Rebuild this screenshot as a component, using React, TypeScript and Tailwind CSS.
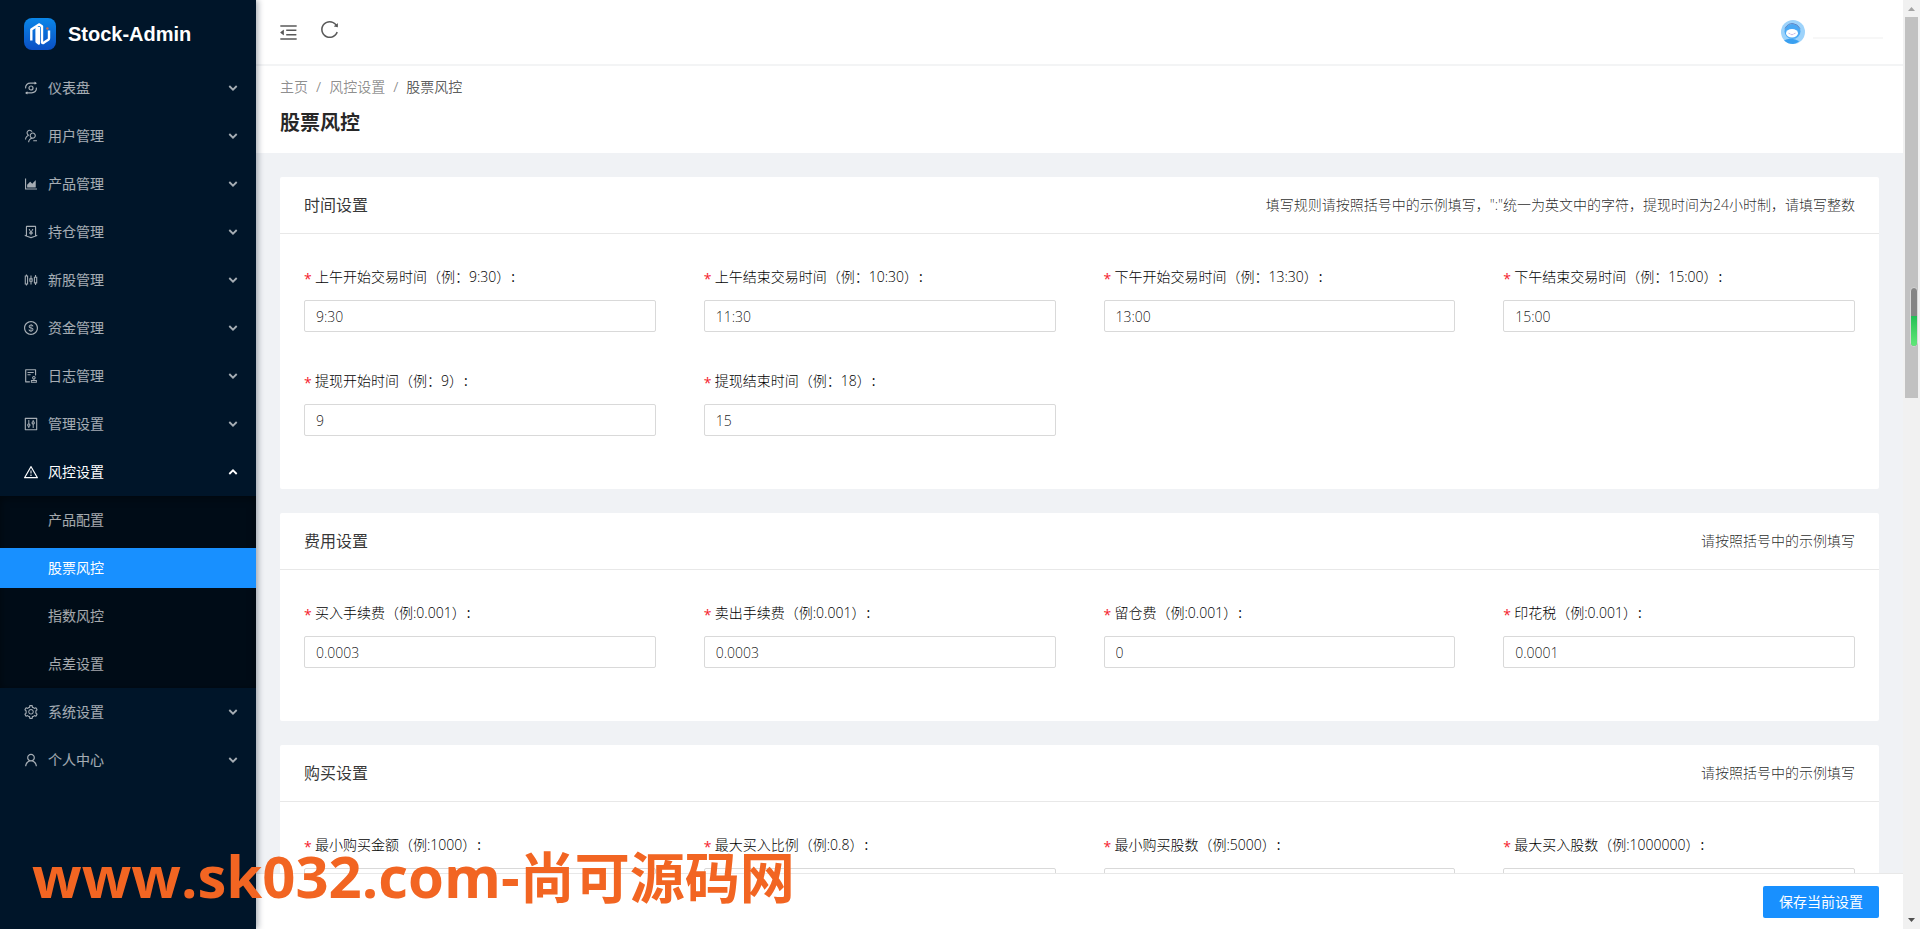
import type { ComponentType } from 'react';
import {
  AiOutlineAreaChart,
  AiOutlineAudit,
  AiOutlineControl,
  AiOutlineDollarCircle,
  AiOutlineMenuFold,
  AiOutlineMoneyCollect,
  AiOutlineReload,
  AiOutlineSetting,
  AiOutlineSliders,
  AiOutlineUser,
  AiOutlineUsergroupDelete,
  AiOutlineWarning,
} from 'react-icons/ai';

type IconType = ComponentType<{ className?: string }>;

function DashboardIcon({ className }: { className?: string }) {
  return (
    <svg viewBox="0 0 16 16" className={className} width="16" height="16" fill="none" stroke="currentColor" strokeWidth="1.2" aria-hidden="true">
      <path d="M2.600 8.400C2.200 5 4.600 3.200 7.400 3.200h5" />
      <path d="M13.400 7.600c.4 3.400-2 5.200-4.800 5.200h-5" />
      <path d="M11.600 1.400v3.400l2.400-1.600z" fill="currentColor" stroke="none" />
      <path d="M4.400 11.200v3.400L2 12.900z" fill="currentColor" stroke="none" />
      <circle cx="8" cy="8" r="2" />
    </svg>
  );
}

function Chevron({ open }: { open?: boolean }) {
  return (
    <svg viewBox="0 0 10 10" width="10" height="10" fill="none" stroke="currentColor" strokeWidth="1.8" className="ml-auto" aria-hidden="true">
      <path d={open ? 'M1.3 7 5 3.3 8.7 7' : 'M1.3 3 5 6.7 8.7 3'} />
    </svg>
  );
}

interface MenuEntry {
  label: string;
  icon: IconType;
  children?: string[];
}

const menu: MenuEntry[] = [
  { label: '仪表盘', icon: DashboardIcon },
  { label: '用户管理', icon: AiOutlineUsergroupDelete },
  { label: '产品管理', icon: AiOutlineAreaChart },
  { label: '持仓管理', icon: AiOutlineMoneyCollect },
  { label: '新股管理', icon: AiOutlineSliders },
  { label: '资金管理', icon: AiOutlineDollarCircle },
  { label: '日志管理', icon: AiOutlineAudit },
  { label: '管理设置', icon: AiOutlineControl },
  { label: '风控设置', icon: AiOutlineWarning, children: ['产品配置', '股票风控', '指数风控', '点差设置'] },
  { label: '系统设置', icon: AiOutlineSetting },
  { label: '个人中心', icon: AiOutlineUser },
];

interface Field {
  id: string;
  label: string;
  value: string;
}

interface Section {
  title: string;
  hint: string;
  fields: Field[];
}

const sections: Section[] = [
  {
    title: '时间设置',
    hint: '填写规则请按照括号中的示例填写，":"统一为英文中的字符，提现时间为24小时制，请填写整数',
    fields: [
      { id: 'am-begin', label: '上午开始交易时间（例：9:30）', value: '9:30' },
      { id: 'am-end', label: '上午结束交易时间（例：10:30）', value: '11:30' },
      { id: 'pm-begin', label: '下午开始交易时间（例：13:30）', value: '13:00' },
      { id: 'pm-end', label: '下午结束交易时间（例：15:00）', value: '15:00' },
      { id: 'withdraw-begin', label: '提现开始时间（例：9）', value: '9' },
      { id: 'withdraw-end', label: '提现结束时间（例：18）', value: '15' },
    ],
  },
  {
    title: '费用设置',
    hint: '请按照括号中的示例填写',
    fields: [
      { id: 'buy-fee', label: '买入手续费（例:0.001）', value: '0.0003' },
      { id: 'sell-fee', label: '卖出手续费（例:0.001）', value: '0.0003' },
      { id: 'stay-fee', label: '留仓费（例:0.001）', value: '0' },
      { id: 'duty-fee', label: '印花税（例:0.001）', value: '0.0001' },
    ],
  },
  {
    title: '购买设置',
    hint: '请按照括号中的示例填写',
    fields: [
      { id: 'min-amount', label: '最小购买金额（例:1000）', value: '' },
      { id: 'max-ratio', label: '最大买入比例（例:0.8）', value: '' },
      { id: 'min-shares', label: '最小购买股数（例:5000）', value: '' },
      { id: 'max-shares', label: '最大买入股数（例:1000000）', value: '' },
    ],
  },
];

function Logo() {
  return (
    <svg viewBox="0 0 32 32" width="32" height="32" aria-hidden="true">
      <defs>
        <linearGradient id="logo-bg" x1="0" y1="0" x2="0" y2="1">
          <stop offset="0" stopColor="#0a86e8" />
          <stop offset="1" stopColor="#0a4fc4" />
        </linearGradient>
      </defs>
      <rect width="32" height="32" rx="8" fill="url(#logo-bg)" />
      <g fill="none" stroke="#fff" strokeWidth="2.4" strokeLinejoin="round">
        <path d="M7.300 22.500V11.500L15 6.400l3 1.800V24.600q.6.8 2 0l3.900-2.500q1.100-.7 1.100-1.900V12.500" />
        <path d="M12.600 9v14.800l2.200 1.700V9" />
      </g>
      <circle cx="23.400" cy="10.500" r="1.200" fill="#c9694f" />
    </svg>
  );
}

function Avatar() {
  return (
    <svg viewBox="0 0 24 24" width="24" height="24" aria-hidden="true">
      <circle cx="12" cy="12" r="12" fill="#9dd3fb" />
      <path d="M3 20.500q4-2.500 9-1.500t6 2.600Q15 24 12 24q-5 0-9-3.500z" fill="#3aa0f0" />
      <ellipse cx="11.500" cy="11.500" rx="8" ry="7.400" fill="#4ba9f4" />
      <path d="M4 8.500Q7 3 12 3.600t7 5" fill="none" stroke="#5f86c4" strokeWidth="1" />
      <ellipse cx="11" cy="13.300" rx="6" ry="4.200" fill="#fff" />
      <path d="M7.500 13.200l2 .8M14.500 13.200l-2 .8M9.800 14.600h2.400" stroke="#b9a6e0" strokeWidth=".8" />
    </svg>
  );
}

function Sidebar() {
  return (
    <aside className="z-10 flex w-64 shrink-0 flex-col bg-[#001529] shadow-[2px_0_6px_rgba(0,21,41,0.35)]">
      <a href="#home" className="flex h-16 items-center gap-3 px-6 pt-1">
        <Logo />
        <h1 className="font-['Liberation_Sans',sans-serif] text-xl font-bold text-white">Stock-Admin</h1>
      </a>
      <nav>
        <ul>
          {menu.map(({ label, icon: Icon, children }) => (
            <li key={label}>
              <a
                href={`#${label}`}
                className={`flex h-12 items-center gap-[9px] pr-[18px] pl-[23px] ${children ? 'text-white' : 'text-white/65'}`}
              >
                <Icon className="size-4 shrink-0" />
                <span>{label}</span>
                <Chevron open={Boolean(children)} />
              </a>
              {children && (
                <ul className="bg-[#000c17] py-1 shadow-[inset_0_2px_8px_rgba(0,0,0,0.45)]">
                  {children.map((child) => (
                    <li key={child} className="mb-2 last:mb-0">
                      <a
                        href={`#${child}`}
                        className={`flex h-10 items-center pl-12 ${child === '股票风控' ? 'bg-[#1890ff] text-white' : 'text-white/65'}`}
                      >
                        {child}
                      </a>
                    </li>
                  ))}
                </ul>
              )}
            </li>
          ))}
        </ul>
      </nav>
    </aside>
  );
}

function SettingsCard({ title, hint, fields }: Section) {
  return (
    <section className="rounded-xs bg-white">
      <header className="flex h-[57px] items-center justify-between border-b border-[#e8e8e8] px-6">
        <h3 className="text-base text-black/80">{title}</h3>
        <p className="font-light text-black/85">{hint}</p>
      </header>
      <div className="grid grid-cols-4 gap-x-12 px-6 pt-6 pb-[23px]">
        {fields.map((field) => (
          <div key={field.id} className="h-[104px]">
            <label htmlFor={field.id} className="flex h-[42px] items-center pb-1 font-light whitespace-nowrap text-black">
              <span className="mr-1 w-[7px] pt-1 font-normal text-[#f5222d]">*</span>
              {field.label}
              <span className="ml-px font-normal">:</span>
            </label>
            <input
              id={field.id}
              defaultValue={field.value}
              className="block h-8 w-full rounded-xs border border-[#d9d9d9] bg-white px-[11px] pt-px text-sm font-light text-black/90 outline-none"
            />
          </div>
        ))}
      </div>
    </section>
  );
}

function Scrollbar() {
  return (
    <div className="flex w-[17px] shrink-0 flex-col items-center bg-[#f1f1f1]" aria-hidden="true">
      <svg viewBox="0 0 17 17" width="17" height="17">
        <path d="M5 11l3.500-4 3.500 4z" fill="#a3a3a3" />
      </svg>
      <div className="relative h-[41%] w-[13px] bg-[#c1c1c1]">
        <div className="absolute top-[270px] right-0 flex h-[60px] w-2 flex-col overflow-hidden rounded-full border border-[#d8d8d8] bg-[#858585]">
          <div className="mt-auto h-[30px] bg-linear-to-b from-[#1fbf55] to-[#5fe878]" />
        </div>
      </div>
      <svg viewBox="0 0 17 17" width="17" height="17" className="mt-auto">
        <path d="M5 6l3.500 4L12 6z" fill="#505050" />
      </svg>
    </div>
  );
}

export default function App() {
  return (
    <div className="relative flex h-screen overflow-hidden bg-[#f0f2f5] font-['Open_Sans','Noto_Sans_CJK_SC',sans-serif] text-sm">
      <Sidebar />
      <div className="flex min-w-0 flex-1 flex-col">
        <header className="flex h-[66px] shrink-0 items-center border-b-2 border-[#f3f4f5] bg-white pr-5 pl-[22px] text-black/65">
          <button type="button" aria-label="收起菜单" className="mr-5">
            <AiOutlineMenuFold className="size-[21px]" />
          </button>
          <button type="button" aria-label="刷新" className="pb-1.5">
            <AiOutlineReload className="size-[21px]" />
          </button>
          <div className="ml-auto flex items-center gap-2">
            <Avatar />
            <div className="mt-3 h-0.5 w-[70px] bg-[#f7f7f7]" />
          </div>
        </header>
        <div className="h-[87px] shrink-0 bg-white px-6 pt-[11px]">
          <nav className="flex gap-2 leading-5 text-black/45">
            <a href="#home">主页</a>
            <span>/</span>
            <a href="#risk">风控设置</a>
            <span>/</span>
            <span className="text-black/65">股票风控</span>
          </nav>
          <h2 className="mt-3 text-xl leading-7 font-bold text-black/85">股票风控</h2>
        </div>
        <main className="min-h-0 flex-1 overflow-y-auto [scrollbar-width:none]">
          <form id="risk-form" className="flex flex-col gap-6 p-6">
            {sections.map((section) => (
              <SettingsCard key={section.title} {...section} />
            ))}
          </form>
        </main>
        <footer className="flex h-14 shrink-0 items-center justify-end border-t border-[#e8e8e8] bg-white px-6">
          <button type="submit" form="risk-form" className="h-8 rounded-xs bg-[#1890ff] px-4 text-white">
            保存当前设置
          </button>
        </footer>
      </div>
      <Scrollbar />
      <p className="pointer-events-none absolute bottom-3.5 left-8 z-20 text-[58px] leading-[76px] font-bold whitespace-nowrap text-[#f26522]">
        www.sk032.com-<span className="text-[55px]">尚可源码网</span>
      </p>
    </div>
  );
}
